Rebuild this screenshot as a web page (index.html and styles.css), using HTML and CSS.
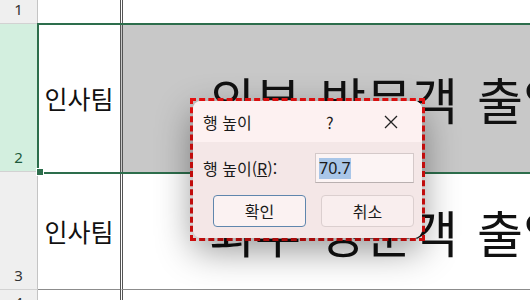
FILE: index.html
```html
<!DOCTYPE html>
<html lang="ko">
<head>
    <meta charset="UTF-8">
    <title>행 높이</title>
    <link rel="stylesheet" href="styles.css">
</head>
<body>
    <div class="sheet">
        <div class="rowhead r1"><span>1</span></div>
        <div class="cell colA r1"></div>
        <div class="cell colB r1"></div>

        <div class="rowhead r2 picked"><span>2</span></div>
        <div class="cell colA r2">인사팀</div>
        <div class="cell colB r2 grey"><span class="big">외부 방문객 출입</span></div>

        <div class="rowhead r3"><span>3</span></div>
        <div class="cell colA r3">인사팀</div>
        <div class="cell colB r3"><span class="big">외부 방문객 출입</span></div>

        <div class="rowhead r4 top"><span>4</span></div>
        <div class="cell colA r4"></div>
        <div class="cell colB r4"></div>

        <div class="selection"><div class="handle"></div></div>

        <div class="mark">
            <div class="dialog">
                <div class="titlebar">
                    <span class="title">행 높이</span>
                    <span class="help">?</span>
                    <svg class="close" width="14" height="14" viewBox="0 0 14 14">
                        <path d="M1 1 L13 13 M13 1 L1 13" stroke="#222" stroke-width="1.3" fill="none"/>
                    </svg>
                </div>
                <div class="body">
                    <div class="field">
                        <label>행 높이(<u>R</u>):</label>
                        <div class="input"><span class="sel">70.7</span></div>
                    </div>
                    <div class="buttons">
                        <button class="btn default">확인</button>
                        <button class="btn">취소</button>
                    </div>
                </div>
            </div>
        </div>
    </div>
</body>
</html>
```

FILE: styles.css
```css
body {
    margin: 0;
    padding: 0;
    background-color: white;
    font-family: "Noto Sans CJK KR", "Noto Sans", sans-serif;
    overflow: hidden;
}

.sheet {
    position: relative;
    width: 530px;
    height: 300px;
    overflow: hidden;
    display: grid;
    grid-template-columns: 38px 82px 1fr;
    grid-template-rows: 24px 148px 118px 1fr;
}

.rowhead {
    box-sizing: border-box;
    background-color: #efefef;
    border-right: 1px solid #c4c4c4;
    border-bottom: 1px solid #d2d2d2;
    display: flex;
    justify-content: center;
    align-items: flex-end;
    padding-bottom: 6px;
    font-family: "Noto Sans", sans-serif;
    font-size: 15px;
    line-height: 1;
    color: #333;
}

.rowhead.picked {
    background-color: #d3efdf;
    color: #1e5a3c;
}

.rowhead.top {
    align-items: flex-start;
    padding-top: 5px;
}

.cell {
    box-sizing: border-box;
    display: flex;
    align-items: center;
    overflow: hidden;
    white-space: nowrap;
    color: #111;
}

.colA {
    justify-content: center;
    font-size: 25px;
}

.colB {
    border-left: 3px double #555;
    padding-left: 86px;
}

.cell.r3 {
    border-bottom: 1px solid #8c8c8c;
}

.grey {
    background-color: #c8c8c8;
}

.big {
    font-size: 50px;
    line-height: 1;
    word-spacing: 5px;
}

.selection {
    position: absolute;
    left: 37px;
    top: 23px;
    width: 510px;
    height: 151px;
    box-sizing: border-box;
    border: 2px solid #2d6e4c;
}

.handle {
    position: absolute;
    left: -3px;
    bottom: -4px;
    width: 6px;
    height: 6px;
    background-color: #2d6e4c;
    border: 1px solid white;
}

.mark {
    position: absolute;
    left: 190px;
    top: 98px;
    width: 235px;
    height: 143px;
    box-sizing: border-box;
    border: 3px dashed #f01010;
}

.dialog {
    height: 100%;
    border-radius: 8px;
    overflow: hidden;
    background-color: #f4e7e7;
    box-shadow: 0 12px 36px rgba(0, 0, 0, 0.42);
    color: #1a1a1a;
    font-size: 16px;
}

.titlebar {
    height: 41px;
    background-color: #fdf1f1;
    display: flex;
    align-items: center;
    padding-left: 10px;
}

.title {
    width: 123px;
}

.help {
    width: 58px;
}

.body {
    padding: 11px 8px 0 10px;
}

.field {
    display: flex;
    align-items: center;
    justify-content: space-between;
}

.input {
    box-sizing: border-box;
    width: 99px;
    height: 30px;
    background-color: #fcf4f4;
    border: 1px solid #d4c9c9;
    border-bottom-color: #b9b0b0;
    display: flex;
    align-items: center;
    padding-left: 3px;
}

.sel {
    background-color: #a9c6e8;
    font-family: "Noto Sans", sans-serif;
    font-size: 16px;
    line-height: 21px;
}

.buttons {
    display: flex;
    gap: 15px;
    margin-top: 12px;
    padding-left: 10px;
}

.btn {
    box-sizing: border-box;
    width: 93px;
    height: 32px;
    border: 1px solid #dbcfcf;
    border-radius: 4px;
    background-color: #f9eeee;
    font-family: "Noto Sans CJK KR", sans-serif;
    font-size: 16px;
    color: #1a1a1a;
}

.btn.default {
    border: 1.5px solid #5f86ad;
    background-color: #fbf2f2;
}
```
